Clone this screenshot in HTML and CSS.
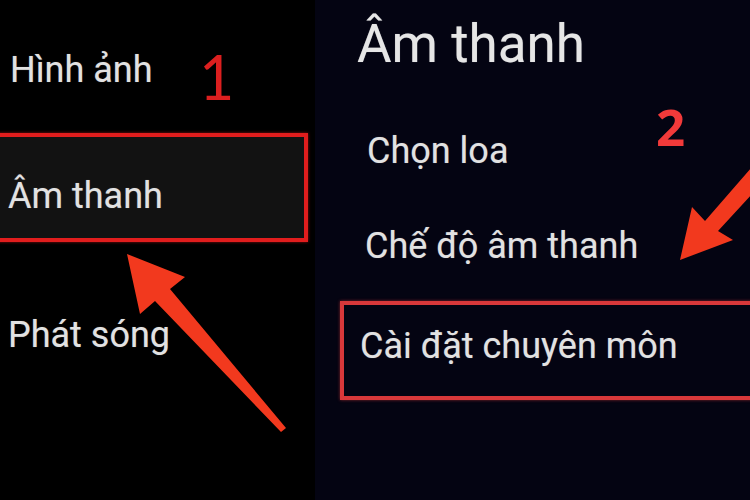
FILE: index.html
```html
<!DOCTYPE html>
<html lang="vi">
<head>
<meta charset="utf-8">
<link rel="stylesheet" href="styles.css">
</head>
<body>
<div class="screen">
  <div class="menu-left">
    <div class="item item-first">Hình ảnh</div>
    <div class="item-box"><span class="item">Âm thanh</span></div>
    <div class="item item-last">Phát sóng</div>
  </div>
  <div class="menu-right">
    <div class="title">Âm thanh</div>
    <div class="sub sub-first">Chọn loa</div>
    <div class="sub sub-second">Chế độ âm thanh</div>
    <div class="sub-box"><span class="sub">Cài đặt chuyên môn</span></div>
  </div>
  <div class="step step-one">1</div>
  <div class="step step-two">2</div>
  <svg class="arrows" width="750" height="500" viewBox="0 0 750 500">
    <polygon points="127,254 185,277 170,289 286,428 281,432 155,301 140,314" />
    <polygon points="680,260 692,207 705,221 752,167 752,194 718,231 733,240" />
  </svg>
</div>
</body>
</html>
```
FILE: styles.css
```css
html, body {
  margin: 0;
  padding: 0;
  background: #000;
}
* {
  box-sizing: border-box;
}
.screen {
  position: relative;
  width: 750px;
  height: 500px;
  display: flex;
  overflow: hidden;
  font-family: Roboto, "Noto Sans", sans-serif;
  color: #e2e2e2;
  text-shadow: 0 0 1px rgba(255, 255, 255, 0.35);
}
.menu-left {
  width: 315px;
  flex: none;
  background: #000;
  display: flex;
  flex-direction: column;
}
.menu-right {
  flex: 1;
  background: #040412;
  display: flex;
  flex-direction: column;
}
.item {
  font-size: 36px;
  line-height: 36px;
  white-space: nowrap;
}
.item-first {
  margin-top: 52px;
  padding-left: 10px;
}
.item-box {
  margin-top: 45px;
  margin-left: -4px;
  width: 312px;
  height: 109px;
  border: 4px solid #e11d1d;
  background: #121212;
  padding: 41px 0 0 8px;
  box-shadow: 0 0 3px rgba(225, 29, 29, 0.6);
}
.item-box .item {
  display: block;
}
.item-last {
  margin-top: 75px;
  padding-left: 8px;
}
.title {
  font-size: 53px;
  line-height: 53px;
  margin-top: 18px;
  padding-left: 42px;
  color: #e6e6e6;
}
.sub {
  font-size: 36px;
  line-height: 36px;
  white-space: nowrap;
}
.sub-first {
  margin-top: 62px;
  padding-left: 52px;
}
.sub-second {
  margin-top: 59px;
  padding-left: 50px;
}
.sub-box {
  margin-top: 37px;
  margin-left: 25px;
  width: 430px;
  height: 99px;
  border: 4px solid #d8383a;
  padding: 23px 0 0 16px;
  box-shadow: 0 0 3px rgba(216, 56, 58, 0.6);
}
.sub-box .sub {
  display: block;
}
.step {
  position: absolute;
  color: #dc1f1f;
  line-height: 1;
  text-shadow: none;
}
.step-one {
  left: 199px;
  top: 46px;
  font-family: Lato, "DejaVu Sans", sans-serif;
  font-weight: 400;
  font-size: 61px;
}
.step-two {
  left: 656px;
  top: 101px;
  font-family: "Open Sans", sans-serif;
  font-weight: 700;
  font-size: 51px;
  color: #f23a3a;
}
.arrows {
  position: absolute;
  left: 0;
  top: 0;
}
.arrows polygon {
  fill: #f2391e;
}
```
